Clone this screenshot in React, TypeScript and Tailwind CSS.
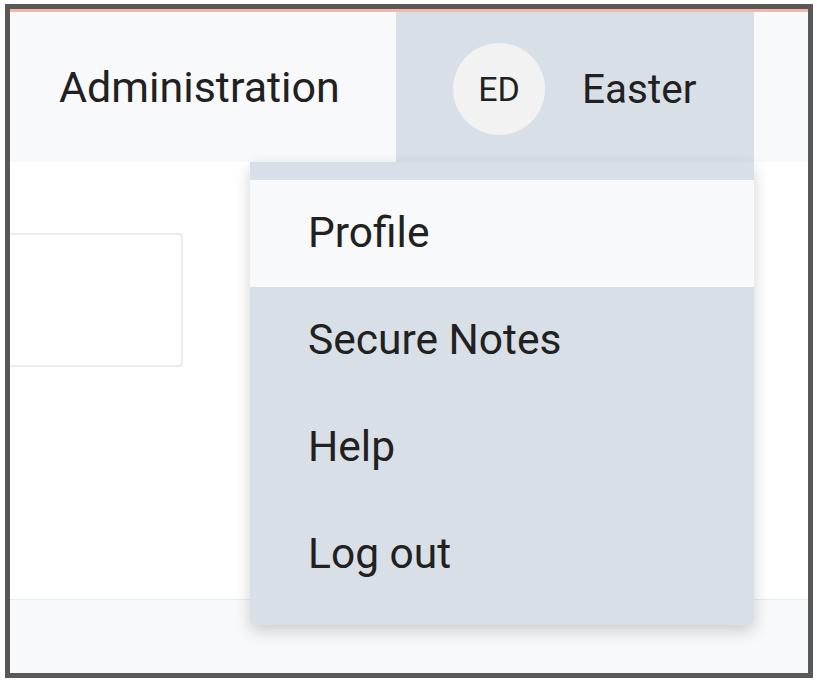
const menuItems = ['Profile', 'Secure Notes', 'Help', 'Log out']

export default function App() {
  return (
    <div className="w-[817px] h-[684px] bg-white pt-[4px] pl-[5px]" style={{ fontFamily: 'Roboto, "Noto Sans", sans-serif' }}>
      <div className="w-[808px] h-[674px] border-[5px] border-[#585858] flex flex-col overflow-hidden text-[#212121]">
        <div className="h-[3px] bg-[#f2b9aa]" />

        <header className="h-[150px] bg-[#f8f9fa] flex items-stretch shrink-0">
          <a className="w-[386px] pl-[49px] flex items-center text-[43px] leading-none">Administration</a>
          <div className="relative w-[358px] bg-[#d9dfe6]">
            <button className="h-full w-full flex items-center pl-[57px]">
              <span className="w-[92px] h-[92px] rounded-full bg-[#f2f2f2] flex items-center justify-center text-[34px] leading-none mt-[4px]">
                ED
              </span>
              <span className="ml-[37px] text-[40.5px] leading-none mt-[4px]">Easter</span>
            </button>

            <div className="absolute top-full right-0 w-[504px] z-10 bg-[#d9dfe6] pt-[18px] pb-[17px] rounded-b-md shadow-[0_6px_16px_rgba(0,0,0,0.18)]">
              {menuItems.map((item, i) => (
                <div
                  key={item}
                  className={`h-[107px] flex items-center pl-[58px] text-[42.5px] leading-none ${i === 0 ? 'bg-[#f8f9fa]' : ''}`}
                >
                  {item}
                </div>
              ))}
            </div>
          </div>
          <div className="flex-1" />
        </header>

        <main className="flex-1 bg-white">
          <div className="mt-[71px] -ml-[10px] w-[183px] h-[134px] border-2 border-[#ececec] rounded-[4px]" />
        </main>

        <footer className="h-[74px] shrink-0 bg-[#f8f9fa] border-t border-[#e9ecef]" />
      </div>
    </div>
  )
}
